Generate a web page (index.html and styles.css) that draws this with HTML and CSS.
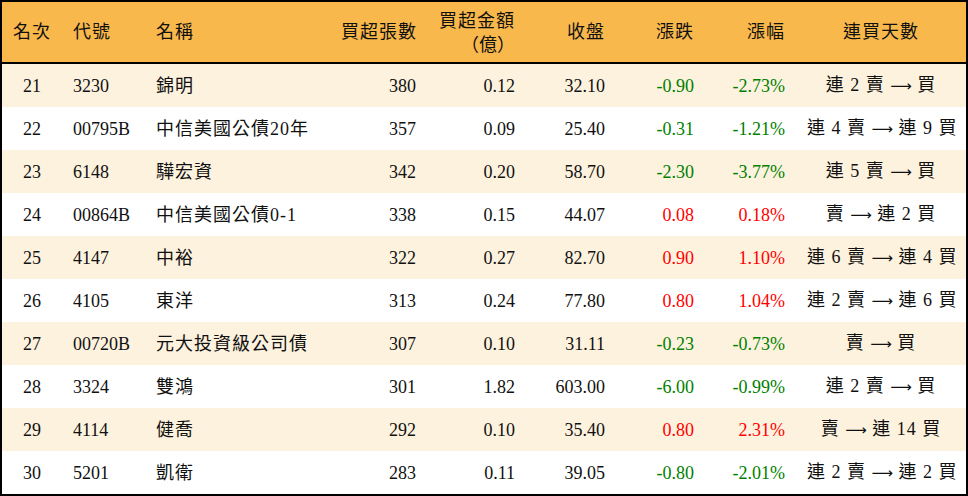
FILE: index.html
```html
<!DOCTYPE html>
<html lang="zh-Hant">
<head>
<meta charset="utf-8">
<title>買超排行</title>
<link rel="stylesheet" href="styles.css">
</head>
<body>
<div class="frame">
<table class="rank">
  <colgroup>
    <col class="c1"><col class="c2"><col class="c3"><col class="c4"><col class="c5"><col class="c6"><col class="c7"><col class="c8"><col class="c9">
  </colgroup>
  <thead>
    <tr>
      <th class="ctr">名次</th>
      <th class="lft">代號</th>
      <th class="lft">名稱</th>
      <th class="rgt">買超張數</th>
      <th class="rgt two">買超金額<br><span class="par">（億）</span></th>
      <th class="rgt">收盤</th>
      <th class="rgt">漲跌</th>
      <th class="rgt">漲幅</th>
      <th class="ctr">連買天數</th>
    </tr>
  </thead>
  <tbody>
    <tr class="alt"><td class="ctr">21</td><td class="lft">3230</td><td class="lft cjk">錦明</td><td class="rgt">380</td><td class="rgt">0.12</td><td class="rgt">32.10</td><td class="rgt dn">-0.90</td><td class="rgt dn">-2.73%</td><td class="ctr cjk">連 2 賣 <span class="ar">⟶</span> 買</td></tr>
    <tr><td class="ctr">22</td><td class="lft">00795B</td><td class="lft cjk">中信美國公債20年</td><td class="rgt">357</td><td class="rgt">0.09</td><td class="rgt">25.40</td><td class="rgt dn">-0.31</td><td class="rgt dn">-1.21%</td><td class="ctr cjk">連 4 賣 <span class="ar">⟶</span> 連 9 買</td></tr>
    <tr class="alt"><td class="ctr">23</td><td class="lft">6148</td><td class="lft cjk">驊宏資</td><td class="rgt">342</td><td class="rgt">0.20</td><td class="rgt">58.70</td><td class="rgt dn">-2.30</td><td class="rgt dn">-3.77%</td><td class="ctr cjk">連 5 賣 <span class="ar">⟶</span> 買</td></tr>
    <tr><td class="ctr">24</td><td class="lft">00864B</td><td class="lft cjk">中信美國公債0-1</td><td class="rgt">338</td><td class="rgt">0.15</td><td class="rgt">44.07</td><td class="rgt up">0.08</td><td class="rgt up">0.18%</td><td class="ctr cjk">賣 <span class="ar">⟶</span> 連 2 買</td></tr>
    <tr class="alt"><td class="ctr">25</td><td class="lft">4147</td><td class="lft cjk">中裕</td><td class="rgt">322</td><td class="rgt">0.27</td><td class="rgt">82.70</td><td class="rgt up">0.90</td><td class="rgt up">1.10%</td><td class="ctr cjk">連 6 賣 <span class="ar">⟶</span> 連 4 買</td></tr>
    <tr><td class="ctr">26</td><td class="lft">4105</td><td class="lft cjk">東洋</td><td class="rgt">313</td><td class="rgt">0.24</td><td class="rgt">77.80</td><td class="rgt up">0.80</td><td class="rgt up">1.04%</td><td class="ctr cjk">連 2 賣 <span class="ar">⟶</span> 連 6 買</td></tr>
    <tr class="alt"><td class="ctr">27</td><td class="lft">00720B</td><td class="lft cjk">元大投資級公司債</td><td class="rgt">307</td><td class="rgt">0.10</td><td class="rgt">31.11</td><td class="rgt dn">-0.23</td><td class="rgt dn">-0.73%</td><td class="ctr cjk">賣 <span class="ar">⟶</span> 買</td></tr>
    <tr><td class="ctr">28</td><td class="lft">3324</td><td class="lft cjk">雙鴻</td><td class="rgt">301</td><td class="rgt">1.82</td><td class="rgt">603.00</td><td class="rgt dn">-6.00</td><td class="rgt dn">-0.99%</td><td class="ctr cjk">連 2 賣 <span class="ar">⟶</span> 買</td></tr>
    <tr class="alt"><td class="ctr">29</td><td class="lft">4114</td><td class="lft cjk">健喬</td><td class="rgt">292</td><td class="rgt">0.10</td><td class="rgt">35.40</td><td class="rgt up">0.80</td><td class="rgt up">2.31%</td><td class="ctr cjk">賣 <span class="ar">⟶</span> 連 14 買</td></tr>
    <tr><td class="ctr">30</td><td class="lft">5201</td><td class="lft cjk">凱衛</td><td class="rgt">283</td><td class="rgt">0.11</td><td class="rgt">39.05</td><td class="rgt dn">-0.80</td><td class="rgt dn">-2.01%</td><td class="ctr cjk">連 2 賣 <span class="ar">⟶</span> 連 2 買</td></tr>
  </tbody>
</table>
</div>
</body>
</html>
```
FILE: styles.css
```css
html, body {
  margin: 0;
  padding: 0;
  background: #ffffff;
}
body {
  font-family: "Liberation Serif", "Noto Sans CJK TC", serif;
  font-size: 18px;
  color: #111111;
}
.frame {
  width: 964px;
  border: 2px solid #000000;
}
.rank {
  width: 964px;
  table-layout: fixed;
  border-collapse: separate;
  border-spacing: 0;
}
.c1 { width: 60px; }
.c2 { width: 83px; }
.c3 { width: 185px; }
.c4 { width: 97px; }
.c5 { width: 99px; }
.c6 { width: 90px; }
.c7 { width: 89px; }
.c8 { width: 91px; }
.c9 { width: 170px; }

.rank thead tr { height: 62px; }
.rank th {
  background: #f9b84c;
  border-bottom: 2px solid #000000;
  font-weight: normal;
  letter-spacing: 1px;
  padding: 0 11px;
  line-height: 22px;
  vertical-align: middle;
  white-space: nowrap;
}
.rank th.two { padding-top: 2px; }
.par {
  font-family: "Noto Sans CJK TC", sans-serif;
  letter-spacing: 0;
}
.rank tbody tr { height: 43px; }
.rank td {
  padding: 0 11px;
  vertical-align: middle;
  white-space: nowrap;
  line-height: 22px;
}
.rank tbody tr.alt td { background: #fdf2de; }
.ctr { text-align: center; }
.lft { text-align: left; }
.rgt { text-align: right; }
.cjk { letter-spacing: 1px; }
.ar {
  font-family: "DejaVu Sans", sans-serif;
  font-size: 15px;
  letter-spacing: 0;
}
.up { color: #ff0000; }
.dn { color: #008000; }
```
